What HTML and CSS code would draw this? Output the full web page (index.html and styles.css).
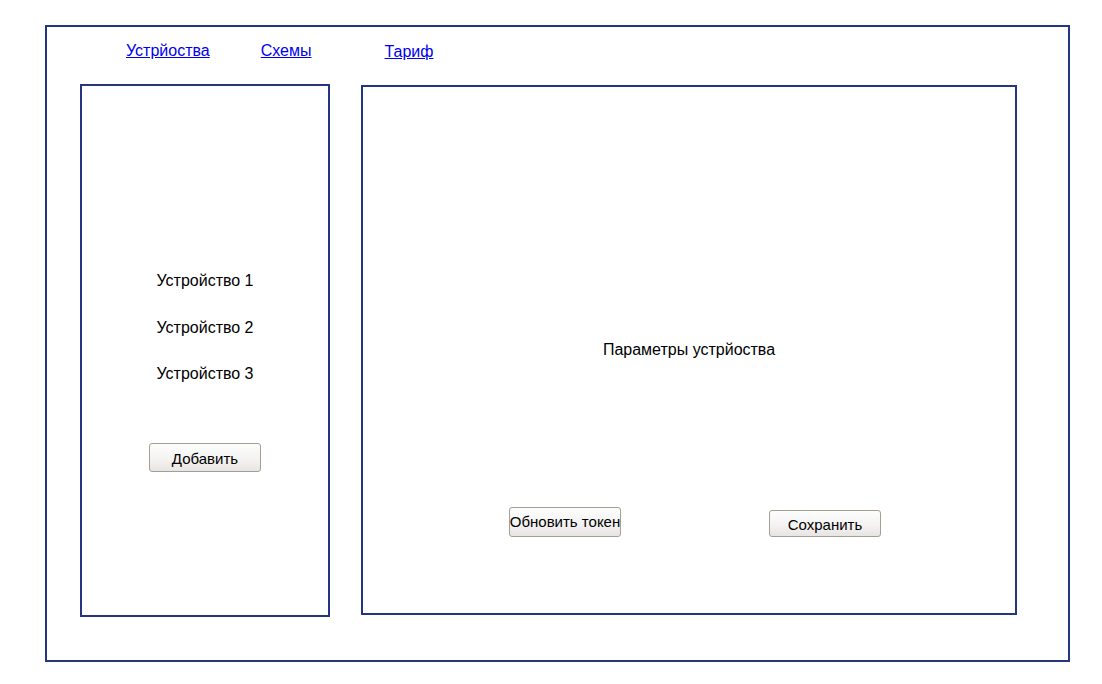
FILE: index.html
```html
<!DOCTYPE html>
<html lang="ru">
<head>
<meta charset="utf-8">
<title>Устройства</title>
<link rel="stylesheet" href="styles.css">
</head>
<body>
<div class="frame">
  <nav class="nav">
    <a href="#" class="nav-link nav-devices">Устрйоства</a>
    <a href="#" class="nav-link nav-schemes">Схемы</a>
    <a href="#" class="nav-link nav-tariff">Тариф</a>
  </nav>
  <div class="content">
    <aside class="device-list">
      <div class="device">Устройство 1</div>
      <div class="device">Устройство 2</div>
      <div class="device">Устройство 3</div>
      <button class="btn btn-add">Добавить</button>
    </aside>
    <main class="params">
      <div class="params-title">Параметры устрйоства</div>
      <div class="params-actions">
        <button class="btn btn-token">Обновить токен</button>
        <button class="btn btn-save">Сохранить</button>
      </div>
    </main>
  </div>
</div>
</body>
</html>
```
FILE: styles.css
```css
html, body {
  margin: 0;
  padding: 0;
  background: #ffffff;
}

body {
  font-family: "Liberation Sans", Arial, sans-serif;
  font-size: 16px;
  color: #000000;
}

.frame {
  box-sizing: border-box;
  margin: 25px 0 0 45px;
  width: 1025px;
  height: 637px;
  border: 2px solid #24367f;
  display: flex;
  flex-direction: column;
}

.nav {
  display: flex;
  align-items: flex-start;
  padding: 15px 0 0 79px;
  height: 18px;
}

.nav-link {
  color: #0000ee;
  text-decoration: underline;
  line-height: 18px;
  font-size: 16px;
}

.nav-schemes {
  margin-left: 51px;
}

.nav-tariff {
  margin-left: 73px;
  margin-top: 1px;
}

.content {
  display: flex;
  align-items: flex-start;
  padding: 24px 0 0 33px;
}

.device-list {
  box-sizing: border-box;
  width: 250px;
  height: 533px;
  border: 2px solid #24367f;
  display: flex;
  flex-direction: column;
  align-items: center;
  padding-top: 186px;
}

.device {
  line-height: 18px;
  font-size: 16px;
  margin-bottom: 28.5px;
}

.device:last-of-type {
  margin-bottom: 0;
}

.btn {
  box-sizing: border-box;
  font-family: "Liberation Sans", Arial, sans-serif;
  font-size: 15px;
  color: #000000;
  background: linear-gradient(#fdfdfd, #f3f2f1 60%, #e6e5e3);
  border: 1px solid #a59e92;
  border-radius: 3px;
  padding: 0;
  width: 112px;
  display: flex;
  align-items: center;
  justify-content: center;
  white-space: nowrap;
  overflow: visible;
}

.btn-add {
  margin-top: 60px;
  height: 29px;
  padding-top: 1px;
}

.params {
  box-sizing: border-box;
  margin-left: 31px;
  margin-top: 1px;
  width: 656px;
  height: 530px;
  border: 2px solid #24367f;
  display: flex;
  flex-direction: column;
}

.params-title {
  text-align: center;
  line-height: 18px;
  font-size: 16px;
  margin-top: 254px;
}

.params-actions {
  display: flex;
  align-items: flex-start;
  padding-left: 146px;
  margin-top: 148px;
}

.btn-token {
  height: 30px;
  padding-bottom: 1px;
}

.btn-save {
  margin-left: 148px;
  margin-top: 3px;
  height: 27px;
  padding-top: 1px;
}
```
